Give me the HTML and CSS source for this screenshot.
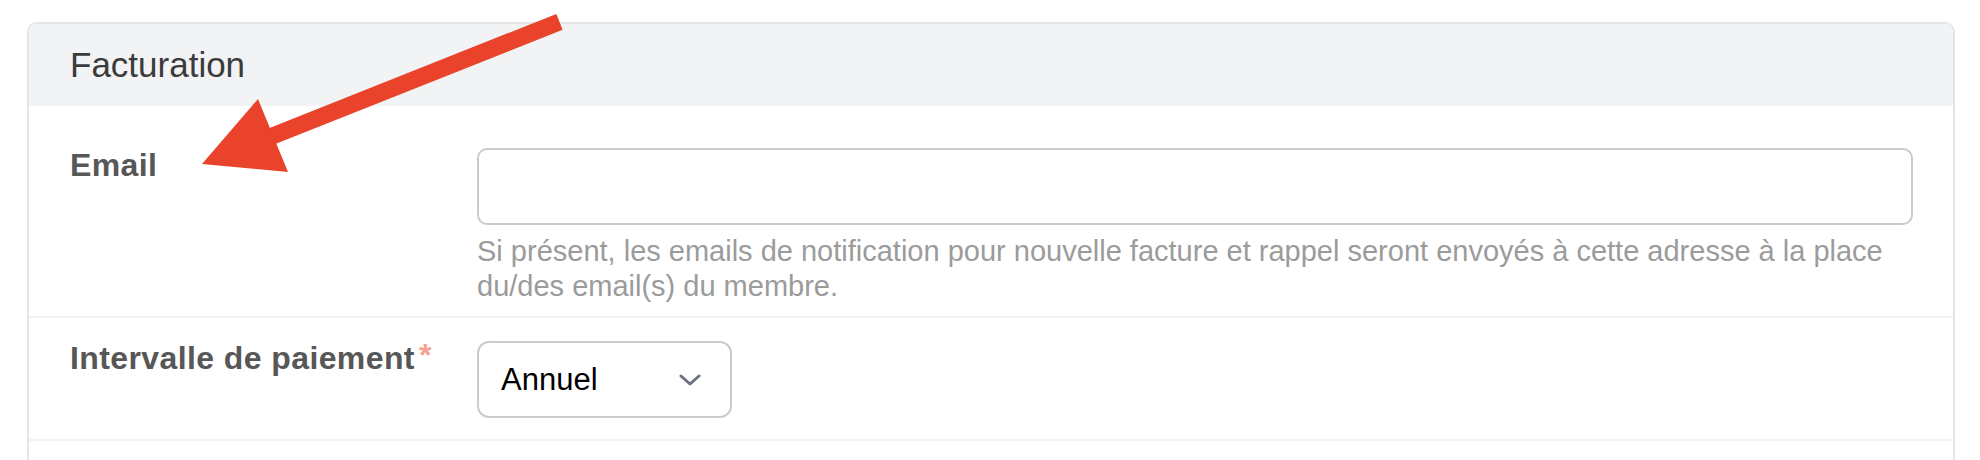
FILE: index.html
```html
<!DOCTYPE html>
<html lang="fr">
<head>
<meta charset="utf-8">
<title>Facturation</title>
<link rel="stylesheet" href="styles.css">
</head>
<body>
<div class="page">
  <section class="card">
    <header class="card-header">Facturation</header>
    <div class="card-body">
      <div class="row first">
        <label class="label" for="email">Email</label>
        <div class="field">
          <input id="email" class="input" type="text">
          <p class="help">Si présent, les emails de notification pour nouvelle facture et rappel seront envoyés à cette adresse à la place du/des email(s) du membre.</p>
        </div>
      </div>
      <div class="row second">
        <label class="label">Intervalle de paiement<span class="req">*</span></label>
        <div class="field">
          <div class="select">
            <span>Annuel</span>
            <svg class="chevron" width="22" height="12" viewBox="0 0 22 12"><path d="M2 2 L11 10 L20 2" fill="none" stroke="#6b7280" stroke-width="3" stroke-linecap="round" stroke-linejoin="round"/></svg>
          </div>
        </div>
      </div>
      <div class="row filler"></div>
    </div>
  </section>
  <svg class="arrow" width="1980" height="460" viewBox="0 0 1980 460">
    <line x1="257.7" y1="141.8" x2="559.5" y2="21.8" stroke="#e9432b" stroke-width="17"/>
    <polygon points="202,164 258,99 288,172" fill="#e9432b"/>
  </svg>
</div>
</body>
</html>
```
FILE: styles.css
```css
* { box-sizing: border-box; }
body {
  margin: 0;
  background: #ffffff;
  font-family: "Liberation Sans", Arial, sans-serif;
}
.page {
  position: relative;
  padding: 22px 25px 0 27px;
}
.card {
  border: 2px solid #e3e5e8;
  border-radius: 10px;
  overflow: hidden;
}
.card-header {
  height: 82px;
  display: flex;
  align-items: center;
  padding-left: 41px;
  background: #f2f3f5;
  font-size: 35px;
  color: #3b3b3b;
}
.row {
  display: grid;
  grid-template-columns: 407px 1fr;
  align-items: start;
  padding: 23px 40px 21px 41px;
  border-bottom: 2px solid #f0f1f2;
}
.row.first { padding-top: 42px; padding-bottom: 12px; }
.row.filler { height: 80px; border-bottom: none; }
.label {
  margin-top: -3px;
  font-size: 32px;
  line-height: 40px;
  font-weight: 700;
  letter-spacing: 0.4px;
  color: #575757;
}
.req {
  display: inline-block;
  margin-left: 4px;
  font-size: 32px;
  line-height: 34px;
  font-weight: 700;
  vertical-align: top;
  color: #f4a192;
}
.input {
  display: block;
  width: 100%;
  height: 77px;
  margin: 0;
  border: 2px solid #cbcbcb;
  border-radius: 10px;
  background: #fff;
}
.help {
  margin: 9px 0 0;
  font-size: 29px;
  line-height: 35px;
  color: #9b9b9b;
}
.select {
  width: 255px;
  height: 77px;
  display: flex;
  align-items: center;
  justify-content: space-between;
  padding: 0 29px 0 22px;
  border: 2px solid #cbcbcb;
  border-radius: 12px;
  font-size: 31px;
  color: #000;
}
.chevron { display: block; }
.arrow {
  position: absolute;
  top: 0;
  left: 0;
  pointer-events: none;
}
```
